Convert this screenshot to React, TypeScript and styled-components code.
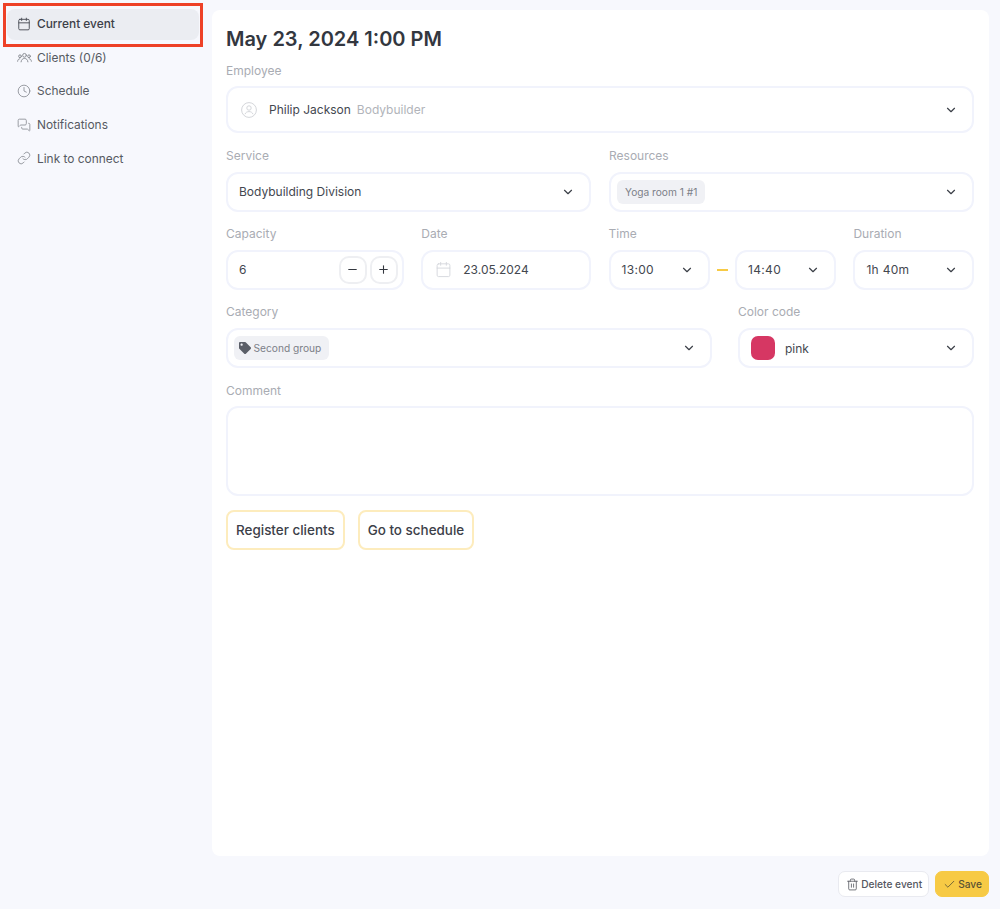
import React from 'react';
import styled, { createGlobalStyle } from 'styled-components';
import { Calendar, Check, ChevronDown, Clock, Link as LinkIcon, MessagesSquare, Minus, Plus, Trash2 } from 'lucide-react';
import { FaTag } from 'react-icons/fa';

const GlobalStyle = createGlobalStyle`
  * {
    box-sizing: border-box;
  }
  body {
    margin: 0;
    background: #f7f8fd;
    font-family: Inter, 'Liberation Sans', sans-serif;
    color: #3c4048;
  }
`;

const Page = styled.div`
  position: relative;
  width: 1000px;
  height: 909px;
  display: grid;
  grid-template-columns: 212px 777px;
  grid-template-rows: 846px 1fr;
  padding-top: 10px;
  overflow: hidden;
`;

const Sidebar = styled.nav`
  margin-top: -1px;
  padding: 0 13px 0 7px;
  display: flex;
  flex-direction: column;
  gap: 2.7px;
`;

const NavItem = styled.div<{ $active?: boolean }>`
  height: 31px;
  display: flex;
  align-items: center;
  gap: 6px;
  padding: 0 0 2px 10px;
  border-radius: 8px;
  font-size: 11.9px;
  font-weight: ${(p) => (p.$active ? 500 : 400)};
  color: ${(p) => (p.$active ? '#3c4048' : '#565a62')};
  background: ${(p) => (p.$active ? '#ebedf2' : 'transparent')};
  & svg {
    color: ${(p) => (p.$active ? '#4a4e56' : '#8d9097')};
    flex-shrink: 0;
  }
`;

const Highlight = styled.div`
  position: absolute;
  left: 3px;
  top: 3px;
  width: 200px;
  height: 44px;
  border: 3px solid #ee4127;
  pointer-events: none;
`;

const Card = styled.main`
  background: #fff;
  border-radius: 8px;
  padding: 14px 15px 0 14px;
  display: flex;
  flex-direction: column;
  gap: 14px;
`;

const Title = styled.h1`
  margin: 0 0 -5.8px;
  font-size: 20px;
  line-height: 30px;
  font-weight: 600;
  color: #33373f;
`;

const Row = styled.div<{ $columns: string; $gap?: number }>`
  display: grid;
  grid-template-columns: ${(p) => p.$columns};
  column-gap: ${(p) => p.$gap ?? 18}px;
`;

const Field = styled.div`
  display: flex;
  flex-direction: column;
  gap: 7.4px;
  min-width: 0;
`;

const Label = styled.div`
  padding-top: 0.6px;
  font-size: 12px;
  line-height: 16.3px;
  color: #a9acb3;
`;

const Box = styled.div<{ $height?: number; $pad?: number }>`
  height: ${(p) => p.$height ?? 40}px;
  border: 2px solid #f1f3fc;
  border-radius: 12px;
  background: #fff;
  display: flex;
  align-items: center;
  padding: 0 14px 0 ${(p) => (p.$pad ?? 12) - 1}px;
  font-size: 12px;
  color: #43474f;
`;

const Grow = styled.div`
  flex: 1;
  display: flex;
  align-items: center;
  min-width: 0;
`;

const Chevron = styled(ChevronDown)`
  width: 14px;
  height: 14px;
  color: #3c4048;
  flex-shrink: 0;
`;

const Role = styled.span`
  margin-left: 6px;
  color: #b1b4ba;
`;

const Avatar = styled.svg`
  width: 16px;
  height: 16px;
  margin-right: 12px;
  color: #d4d6da;
`;

const Chip = styled.span`
  height: 24px;
  display: inline-flex;
  align-items: center;
  gap: 3px;
  padding: 0 8px;
  border-radius: 6px;
  background: #f0f1f5;
  color: #7c8088;
  font-size: 10.2px;
  & svg {
    color: #5b5f68;
    width: 12px;
    height: 12px;
    margin-left: -3.5px;
  }
`;

const StepGroup = styled.div`
  display: flex;
  gap: 3px;
  margin-right: -9.5px;
`;

const StepButton = styled.div`
  width: 28px;
  height: 28px;
  border: 2px solid #eeeff2;
  border-radius: 10px;
  display: flex;
  align-items: center;
  justify-content: center;
  color: #33373f;
`;

const DateIcon = styled(Calendar)`
  width: 17px;
  height: 17px;
  margin-right: 11px;
  color: #d5d7dc;
`;

const TimeRow = styled.div`
  display: grid;
  grid-template-columns: 101px 1fr 101px;
  align-items: center;
`;

const TimeValue = styled(Grow)`
  letter-spacing: 0.3px;
`;

const Dash = styled.div`
  width: 11px;
  height: 2px;
  margin: 0 auto;
  background: #f7ca45;
`;

const Swatch = styled.div`
  width: 24px;
  height: 24px;
  border-radius: 7px;
  background: #d63763;
  margin-right: 10px;
`;

const Comment = styled.div`
  height: 90px;
  border: 2px solid #f1f3fc;
  border-radius: 12px;
`;

const Actions = styled.div`
  display: flex;
  gap: 13px;
`;

const OutlineButton = styled.button`
  height: 40px;
  padding: 0 8px;
  border: 2px solid #fdecbd;
  border-radius: 8px;
  background: #fff;
  font-family: inherit;
  font-size: 13.45px;
  font-weight: 500;
  color: #3c4048;
`;

const Footer = styled.footer`
  grid-column: 1 / 3;
  display: flex;
  justify-content: flex-end;
  align-items: flex-start;
  gap: 6px;
  padding-top: 15px;
`;

const FooterButton = styled.button<{ $primary?: boolean }>`
  height: 26px;
  display: inline-flex;
  align-items: center;
  gap: 2px;
  padding: 0 6px 0 7px;
  border: 1px solid ${(p) => (p.$primary ? '#f7ca45' : '#e9eaf0')};
  border-radius: 7px;
  background: ${(p) => (p.$primary ? '#f7ca45' : '#fff')};
  font-family: inherit;
  font-size: 10.2px;
  font-weight: 500;
  color: ${(p) => (p.$primary ? '#5a5233' : '#55585f')};
`;

const ClientsSvg = styled.svg`
  width: 15px;
  height: 15px;
  margin: 0 -0.5px;
`;

const ClientsIcon = () => (
  <ClientsSvg viewBox="0 0 24 24" fill="none" stroke="currentColor" strokeWidth="1.6" strokeLinecap="round">
    <circle cx="12" cy="8.5" r="3" />
    <circle cx="4.8" cy="10" r="2.2" />
    <circle cx="19.2" cy="10" r="2.2" />
    <path d="M6.5 19c.4-3.6 2.6-5.5 5.5-5.5s5.1 1.900 5.500 5.500" />
    <path d="M1 18c.2-2.400 1.500-4 3.500-4" />
    <path d="M23 18c-.2-2.400-1.500-4-3.500-4" />
  </ClientsSvg>
);

const App: React.FC = () => {
  return (
    <>
      <GlobalStyle />
      <Page>
        <Sidebar>
          <NavItem $active>
            <Calendar size={14} strokeWidth={1.6} />
            Current event
          </NavItem>
          <NavItem>
            <ClientsIcon />
            Clients (0/6)
          </NavItem>
          <NavItem>
            <Clock size={14} strokeWidth={1.5} />
            Schedule
          </NavItem>
          <NavItem>
            <MessagesSquare size={14} strokeWidth={1.5} />
            Notifications
          </NavItem>
          <NavItem>
            <LinkIcon size={14} strokeWidth={1.5} />
            Link to connect
          </NavItem>
        </Sidebar>

        <Card>
          <Title>May 23, 2024 1:00 PM</Title>

          <Field>
            <Label>Employee</Label>
            <Box $height={46.8} $pad={14}>
              <Grow>
                <Avatar viewBox="0 0 16 16" fill="none" stroke="currentColor" strokeWidth="1">
                  <circle cx="8" cy="8" r="7.4" />
                  <circle cx="8" cy="6" r="2.200" />
                  <path d="M4 12.200c.6-1.800 2.200-2.600 4-2.600s3.400.8 4 2.600" />
                </Avatar>
                Philip Jackson
                <Role>Bodybuilder</Role>
              </Grow>
              <Chevron />
            </Box>
          </Field>

          <Row $columns="365px 365px">
            <Field>
              <Label>Service</Label>
              <Box>
                <Grow>Bodybuilding Division</Grow>
                <Chevron />
              </Box>
            </Field>
            <Field>
              <Label>Resources</Label>
              <Box $pad={7}>
                <Grow>
                  <Chip>Yoga room 1 #1</Chip>
                </Grow>
                <Chevron />
              </Box>
            </Field>
          </Row>

          <Row $columns="178px 170px 227.5px 1fr" $gap={17.3}>
            <Field>
              <Label>Capacity</Label>
              <Box>
                <Grow>6</Grow>
                <StepGroup>
                  <StepButton>
                    <Minus size={13} strokeWidth={2} />
                  </StepButton>
                  <StepButton>
                    <Plus size={13} strokeWidth={2} />
                  </StepButton>
                </StepGroup>
              </Box>
            </Field>
            <Field>
              <Label>Date</Label>
              <Box $pad={13}>
                <DateIcon strokeWidth={1.3} />
                23.05.2024
              </Box>
            </Field>
            <Field>
              <Label>Time</Label>
              <TimeRow>
                <Box>
                  <TimeValue>13:00</TimeValue>
                  <Chevron />
                </Box>
                <Dash />
                <Box>
                  <TimeValue>14:40</TimeValue>
                  <Chevron />
                </Box>
              </TimeRow>
            </Field>
            <Field>
              <Label>Duration</Label>
              <Box>
                <TimeValue>1h 40m</TimeValue>
                <Chevron />
              </Box>
            </Field>
          </Row>

          <Row $columns="486px 236px" $gap={26}>
            <Field>
              <Label>Category</Label>
              <Box $pad={7}>
                <Grow>
                  <Chip>
                    <FaTag />
                    Second group
                  </Chip>
                </Grow>
                <Chevron />
              </Box>
            </Field>
            <Field>
              <Label>Color code</Label>
              <Box>
                <Swatch />
                <Grow>pink</Grow>
                <Chevron />
              </Box>
            </Field>
          </Row>

          <Field>
            <Label>Comment</Label>
            <Comment />
          </Field>

          <Actions>
            <OutlineButton>Register clients</OutlineButton>
            <OutlineButton>Go to schedule</OutlineButton>
          </Actions>
        </Card>

        <Footer>
          <FooterButton>
            <Trash2 size={13} strokeWidth={1.5} />
            Delete event
          </FooterButton>
          <FooterButton $primary>
            <Check size={13} strokeWidth={1.5} />
            Save
          </FooterButton>
        </Footer>
        <Highlight />
      </Page>
    </>
  );
};

export default App;
